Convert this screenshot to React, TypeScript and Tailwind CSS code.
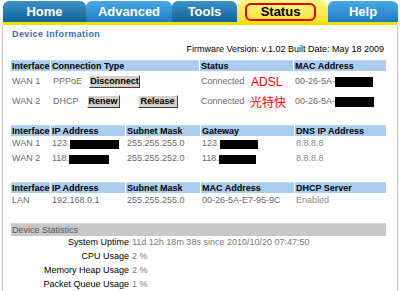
import React from "react";

const Box = ({ w, h = 9 }: { w: number; h?: number }) => (
  <span className="inline-block bg-black align-middle" style={{ width: w, height: h }} />
);

const Btn = ({ children, className = "" }: { children: React.ReactNode; className?: string }) => (
  <span
    className={
      "inline-flex h-[13px] items-center justify-center bg-[#d4d0c8] border border-t-white border-l-white border-b-[#404040] border-r-[#404040] px-[4px] text-[9px] font-bold text-black leading-none " +
      className
    }
  >
    {children}
  </span>
);

const Th = ({ w, children }: { w: number; children: React.ReactNode }) => (
  <div
    className="h-[11px] bg-[#a9ccef] pl-[1px] text-[9px] font-bold leading-[11px] text-black border-t border-dotted border-t-[#d2e6fa]"
    style={{ width: w }}
  >
    {children}
  </div>
);

const Td = ({ w, children, className = "" }: { w: number; children?: React.ReactNode; className?: string }) => (
  <div className={"flex items-center pl-[1px] text-[9px] text-[#6a6a6a] whitespace-nowrap " + className} style={{ width: w }}>
    {children}
  </div>
);

const Tab = ({
  w,
  label,
  light,
}: {
  w: number;
  label: string;
  light?: boolean;
}) => (
  <div
    className={
      "flex h-[21px] items-center justify-center rounded-t-[6px] text-[13px] font-bold text-white " +
      (light
        ? "bg-gradient-to-b from-[#47aae6] to-[#1d7cc0]"
        : "bg-gradient-to-b from-[#3a93c9] to-[#12619a]")
    }
    style={{ width: w }}
  >
    {label}
  </div>
);

export default function App() {
  const t2 = [39, 74, 74, 93, 91];
  return (
    <div
      className="w-[400px] h-[291px] overflow-hidden bg-white"
      style={{ fontFamily: '"Liberation Sans", Arial, "Noto Sans CJK SC", sans-serif' }}
    >
      {/* Tabs */}
      <div className="flex h-[22px] items-end pl-[3px]">
        <Tab w={83} label="Home" />
        <Tab w={86} label="Advanced" light />
        <Tab w={65} label="Tools" />
        <div className="flex h-[22px] w-[91px] items-start rounded-t-[8px] bg-gradient-to-b from-[#fff684] to-[#f4e21e] pt-[3px]">
          <div className="ml-[8px] flex h-[18px] w-[71px] items-center justify-center rounded-[6px] border-2 border-[#e30000] text-[13px] font-bold text-black">
            Status
          </div>
        </div>
        <Tab w={70} label="Help" light />
      </div>
      <div className="ml-[3px] mr-[3px] h-[3px] bg-[#f2df00]" />

      {/* Body */}
      <div className="ml-[2px] mr-[2px] h-[266px] border-l border-r border-[#c4c4c4] pl-[8px] pr-[10px] pt-[3px]">
        <div className="h-[12px] text-[9px] font-bold leading-[12px] tracking-[0.4px] text-[#3a6da8] pl-[1px]">
          Device Information
        </div>
        <div className="mt-[3px] h-[12px] pr-[3px] text-right text-[9px] leading-[12px] text-black">
          Firmware Version: v.1.02 Built Date: May 18 2009
        </div>

        {/* Table 1 */}
        <div className="mt-[5px] flex flex-col gap-px">
          <div className="flex gap-px">
            <Th w={39}>Interface</Th>
            <Th w={148}>Connection Type</Th>
            <Th w={93}>Status</Th>
            <Th w={92}>MAC Address</Th>
          </div>
          <div className="flex h-[19px] gap-px">
            <Td w={39}>WAN 1</Td>
            <Td w={148} className="pl-[2px]">
              <span>PPPoE</span>
              <Btn className="ml-[7px] w-[51px]">Disconnect</Btn>
            </Td>
            <Td w={93}>
              <span className="w-[50px]">Connected</span>
              <span className="text-[12px] text-[#ff0000]">ADSL</span>
            </Td>
            <Td w={92}>
              00-26-5A-
              <Box w={38} h={10} />
            </Td>
          </div>
          <div className="flex h-[19px] gap-px">
            <Td w={39}>WAN 2</Td>
            <Td w={148} className="pl-[2px]">
              <span>DHCP</span>
              <Btn className="ml-[8px] w-[33px]">Renew</Btn>
              <Btn className="ml-[18px] w-[40px]">Release</Btn>
            </Td>
            <Td w={93}>
              <span className="w-[49px]">Connected</span>
              <span className="text-[12px] text-[#ff0000]" style={{ fontFamily: '"Noto Sans CJK SC", sans-serif' }}>
                光特快
              </span>
            </Td>
            <Td w={92}>
              00-26-5A-
              <Box w={39} h={10} />
            </Td>
          </div>
        </div>

        {/* Table 2 */}
        <div className="mt-[14px] flex flex-col gap-px">
          <div className="flex gap-px">
            <Th w={t2[0]}>Interface</Th>
            <Th w={t2[1]}>IP Address</Th>
            <Th w={t2[2]}>Subnet Mask</Th>
            <Th w={t2[3]}>Gateway</Th>
            <Th w={t2[4]}>DNS IP Address</Th>
          </div>
          <div className="flex h-[14px] gap-px">
            <Td w={t2[0]}>WAN 1</Td>
            <Td w={t2[1]}>
              123.
              <Box w={49} />
            </Td>
            <Td w={t2[2]}>255.255.255.0</Td>
            <Td w={t2[3]}>
              123.
              <Box w={38} />
            </Td>
            <Td w={t2[4]} className="text-[#8a8a8a]">8.8.8.8</Td>
          </div>
          <div className="flex h-[14px] gap-px">
            <Td w={t2[0]}>WAN 2</Td>
            <Td w={t2[1]}>
              118.
              <Box w={40} />
            </Td>
            <Td w={t2[2]}>255.255.252.0</Td>
            <Td w={t2[3]}>
              118.
              <Box w={37} />
            </Td>
            <Td w={t2[4]} className="text-[#8a8a8a]">8.8.8.8</Td>
          </div>
        </div>

        {/* Table 3 */}
        <div className="mt-[16px] flex flex-col gap-px">
          <div className="flex gap-px">
            <Th w={t2[0]}>Interface</Th>
            <Th w={t2[1]}>IP Address</Th>
            <Th w={t2[2]}>Subnet Mask</Th>
            <Th w={t2[3]}>MAC Address</Th>
            <Th w={t2[4]}>DHCP Server</Th>
          </div>
          <div className="flex h-[14px] gap-px">
            <Td w={t2[0]}>LAN</Td>
            <Td w={t2[1]}>192.168.0.1</Td>
            <Td w={t2[2]}>255.255.255.0</Td>
            <Td w={t2[3]}>00-26-5A-E7-95-9C</Td>
            <Td w={t2[4]} className="text-[#8a8a8a]">Enabled</Td>
          </div>
        </div>

        {/* Device Statistics */}
        <div className="mt-[15px] h-[13px] w-[375px] bg-[#c8c8c8] pl-[1px] text-[9px] leading-[13px] text-[#555] border-t border-dotted border-t-[#e0e0e0]">
          Device Statistics
        </div>
        <div className="flex flex-col text-[9px]">
          {[
            ["System Uptime", "11d 12h 18m 38s since 2010/10/20 07:47:50"],
            ["CPU Usage", "2 %"],
            ["Memory Heap Usage", "2 %"],
            ["Packet Queue Usage", "1 %"],
          ].map(([k, v]) => (
            <div key={k} className="flex h-[14px] items-center">
              <div className="w-[118px] text-right text-black">{k}</div>
              <div className="ml-[3px] text-[#7a7a7a]">{v}</div>
            </div>
          ))}
        </div>
      </div>
    </div>
  );
}
